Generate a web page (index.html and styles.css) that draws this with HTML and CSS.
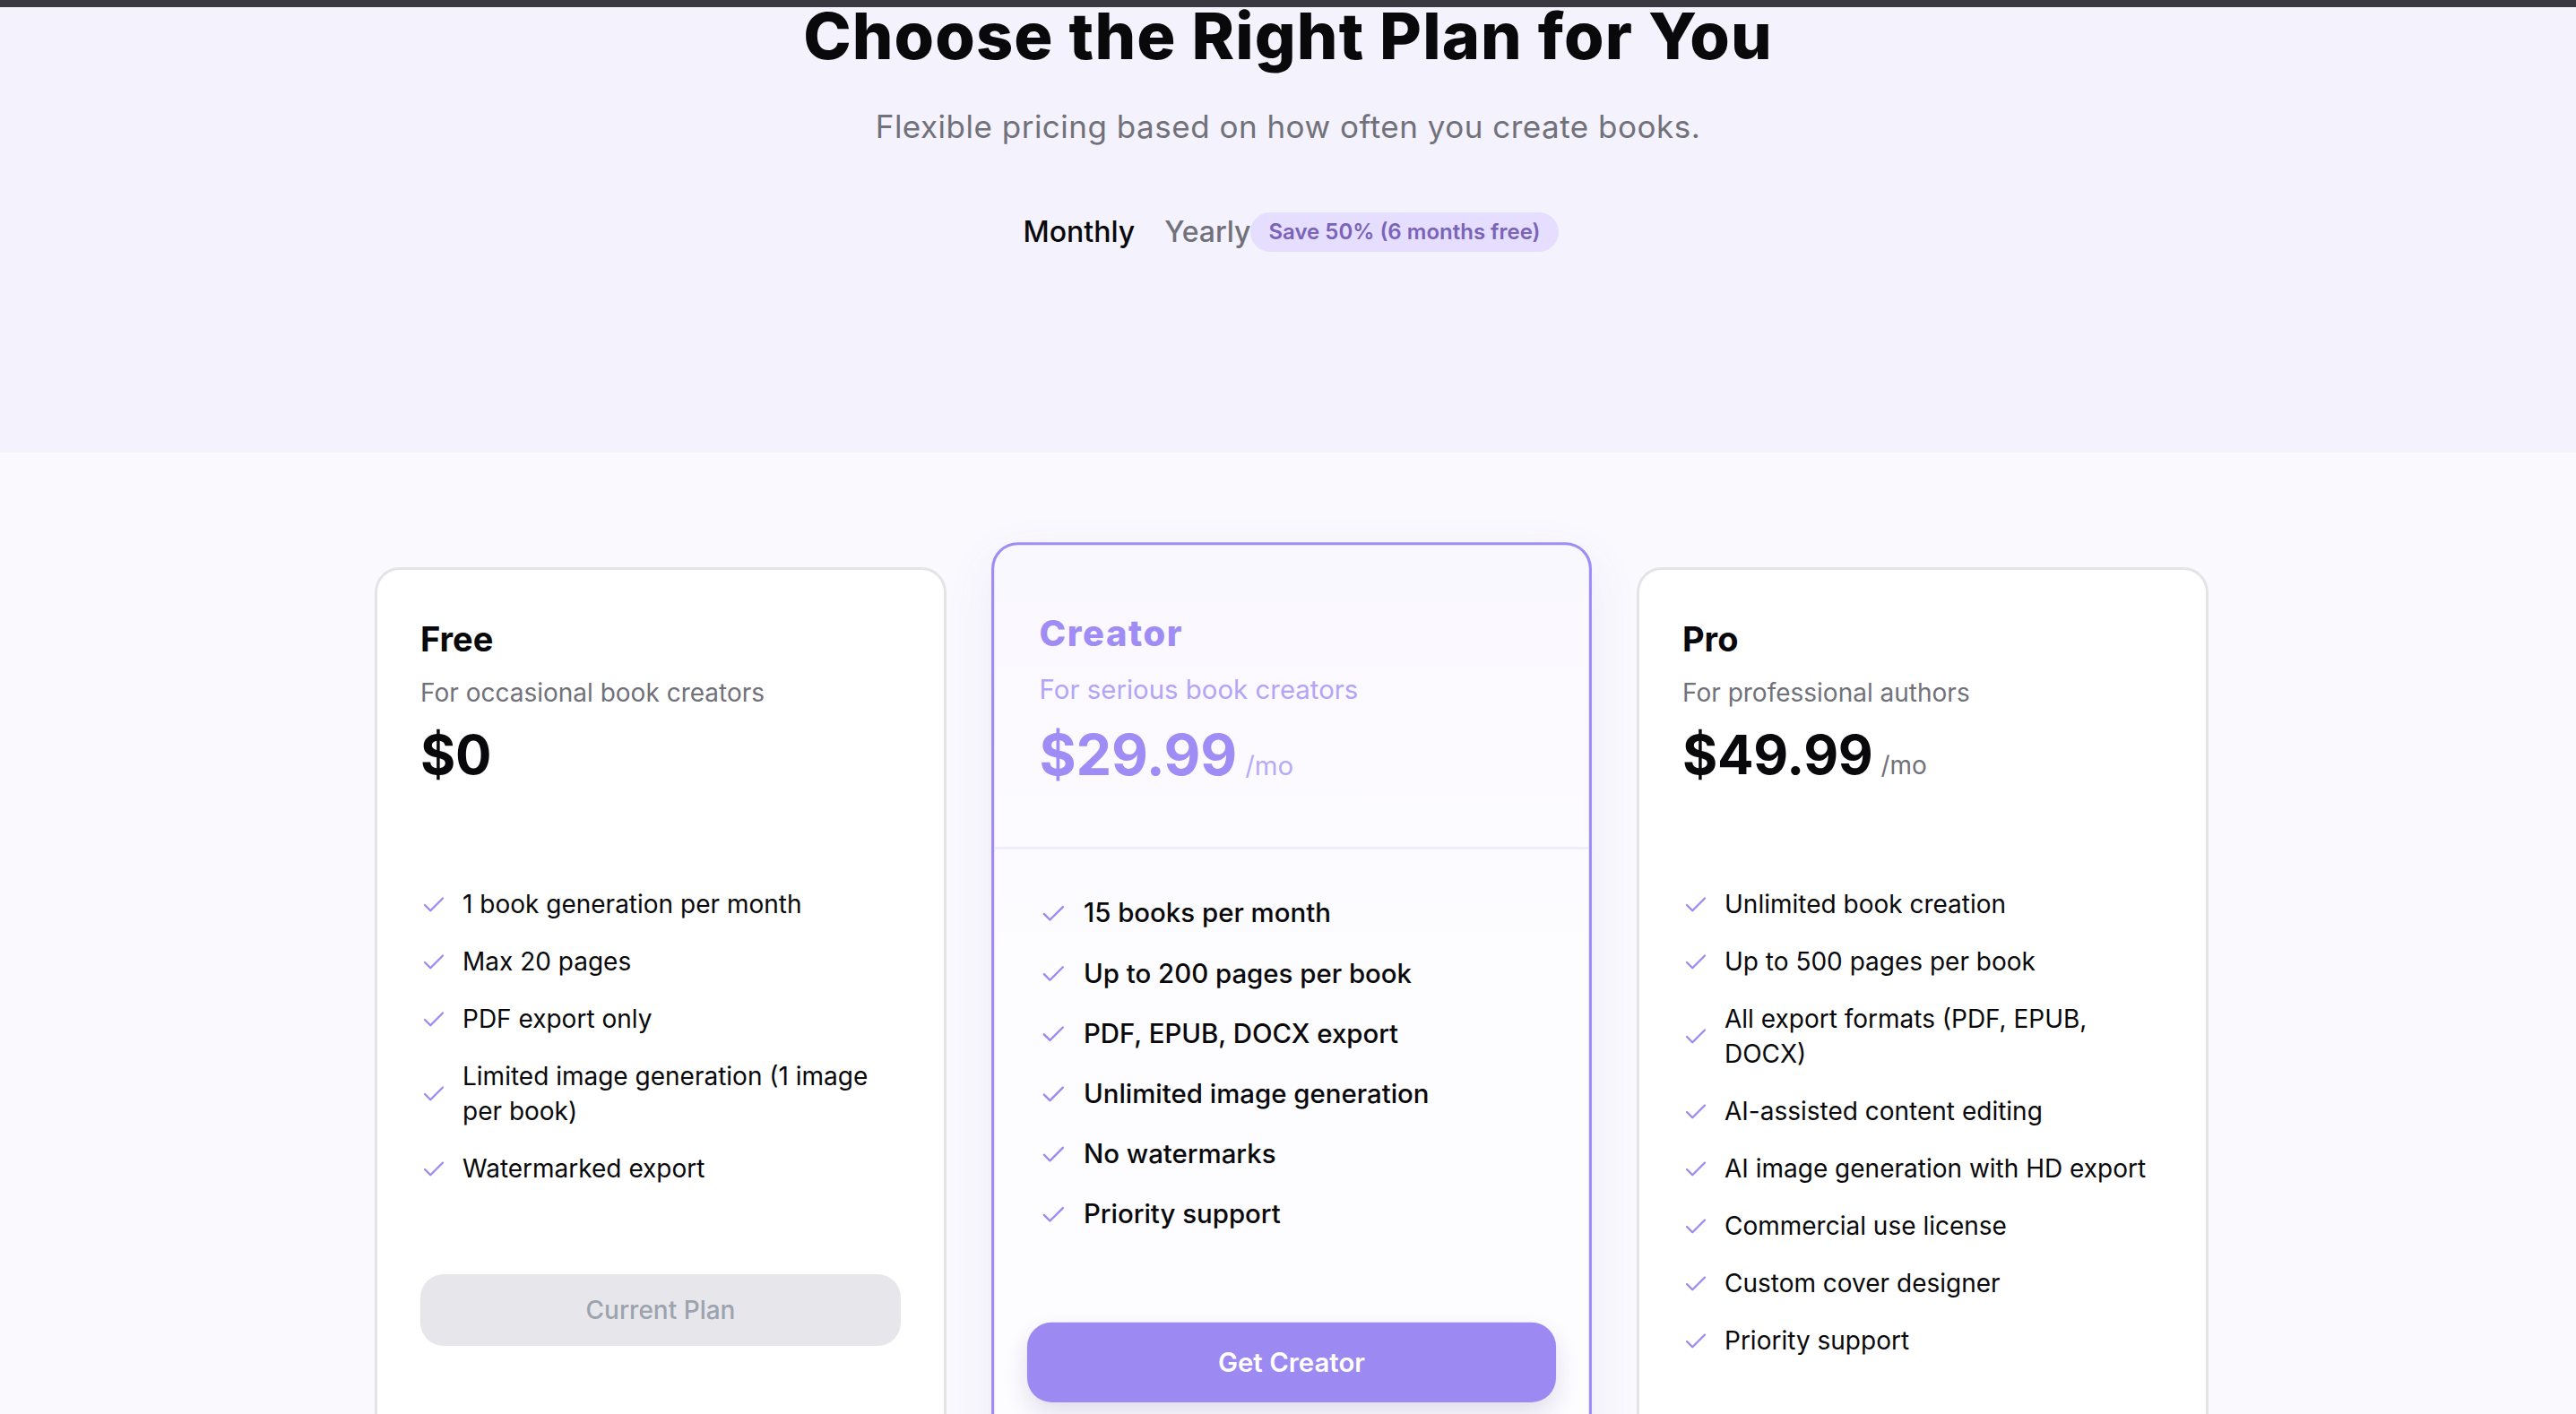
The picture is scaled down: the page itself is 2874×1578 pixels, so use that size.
FILE: index.html
```html
<!DOCTYPE html>
<html lang="en">
<head>
<meta charset="utf-8">
<title>Pricing</title>
<link rel="stylesheet" href="styles.css">
</head>
<body>
<div class="topbar"></div>
<header class="hero">
  <h1 class="hero-title">Choose the Right Plan for You</h1>
  <p class="lead">Flexible pricing based on how often you create books.</p>
  <div class="toggle">
    <span class="opt opt-active">Monthly</span>
    <span class="opt">Yearly</span>
    <span class="badge">Save 50% (6 months free)</span>
  </div>
</header>

<section class="plans">
  <div class="grid">
    <article class="card">
      <div class="card-head">
        <h3 class="plan-name">Free</h3>
        <p class="plan-desc">For occasional book creators</p>
        <div class="price"><span class="amount">$0</span></div>
      </div>
      <ul class="features">
        <li><svg class="check" viewBox="0 0 24 24"><polyline points="20 6 9 17 4 12"/></svg><span>1 book generation per month</span></li>
        <li><svg class="check" viewBox="0 0 24 24"><polyline points="20 6 9 17 4 12"/></svg><span>Max 20 pages</span></li>
        <li><svg class="check" viewBox="0 0 24 24"><polyline points="20 6 9 17 4 12"/></svg><span>PDF export only</span></li>
        <li><svg class="check" viewBox="0 0 24 24"><polyline points="20 6 9 17 4 12"/></svg><span>Limited image generation (1 image per book)</span></li>
        <li><svg class="check" viewBox="0 0 24 24"><polyline points="20 6 9 17 4 12"/></svg><span>Watermarked export</span></li>
      </ul>
      <div class="card-foot">
        <button class="btn btn-muted">Current Plan</button>
      </div>
    </article>

    <article class="card card-featured">
      <div class="card-head">
        <h3 class="plan-name plan-name-display">Creator</h3>
        <p class="plan-desc">For serious book creators</p>
        <div class="price"><span class="amount">$29.99</span><span class="per">/mo</span></div>
      </div>
      <ul class="features">
        <li><svg class="check" viewBox="0 0 24 24"><polyline points="20 6 9 17 4 12"/></svg><span>15 books per month</span></li>
        <li><svg class="check" viewBox="0 0 24 24"><polyline points="20 6 9 17 4 12"/></svg><span>Up to 200 pages per book</span></li>
        <li><svg class="check" viewBox="0 0 24 24"><polyline points="20 6 9 17 4 12"/></svg><span>PDF, EPUB, DOCX export</span></li>
        <li><svg class="check" viewBox="0 0 24 24"><polyline points="20 6 9 17 4 12"/></svg><span>Unlimited image generation</span></li>
        <li><svg class="check" viewBox="0 0 24 24"><polyline points="20 6 9 17 4 12"/></svg><span>No watermarks</span></li>
        <li><svg class="check" viewBox="0 0 24 24"><polyline points="20 6 9 17 4 12"/></svg><span>Priority support</span></li>
      </ul>
      <div class="card-foot">
        <button class="btn btn-primary">Get Creator</button>
      </div>
    </article>

    <article class="card">
      <div class="card-head">
        <h3 class="plan-name">Pro</h3>
        <p class="plan-desc">For professional authors</p>
        <div class="price"><span class="amount">$49.99</span><span class="per">/mo</span></div>
      </div>
      <ul class="features">
        <li><svg class="check" viewBox="0 0 24 24"><polyline points="20 6 9 17 4 12"/></svg><span>Unlimited book creation</span></li>
        <li><svg class="check" viewBox="0 0 24 24"><polyline points="20 6 9 17 4 12"/></svg><span>Up to 500 pages per book</span></li>
        <li><svg class="check" viewBox="0 0 24 24"><polyline points="20 6 9 17 4 12"/></svg><span>All export formats (PDF, EPUB, DOCX)</span></li>
        <li><svg class="check" viewBox="0 0 24 24"><polyline points="20 6 9 17 4 12"/></svg><span>AI-assisted content editing</span></li>
        <li><svg class="check" viewBox="0 0 24 24"><polyline points="20 6 9 17 4 12"/></svg><span>AI image generation with HD export</span></li>
        <li><svg class="check" viewBox="0 0 24 24"><polyline points="20 6 9 17 4 12"/></svg><span>Commercial use license</span></li>
        <li><svg class="check" viewBox="0 0 24 24"><polyline points="20 6 9 17 4 12"/></svg><span>Custom cover designer</span></li>
        <li><svg class="check" viewBox="0 0 24 24"><polyline points="20 6 9 17 4 12"/></svg><span>Priority support</span></li>
      </ul>
      <div class="card-foot">
        <button class="btn btn-muted">Get Pro</button>
      </div>
    </article>
  </div>
</section>
</body>
</html>
```

FILE: styles.css
```css
* { box-sizing: border-box; }

html { overflow: hidden; }

body {
  margin: 0;
  background: #faf9fe;
  font-family: Inter, "Noto Sans", "Liberation Sans", sans-serif;
  color: #09090b;
}

.topbar {
  position: fixed;
  top: 0;
  left: 0;
  right: 0;
  height: 8px;
  background: #3a393f;
  z-index: 10;
}

.hero {
  background: #f4f2fd;
  text-align: center;
  padding: 0 0 224px;
}

.hero-title {
  margin: 0;
  font-size: 72px;
  line-height: 80px;
  font-weight: 800;
  letter-spacing: 1.1px;
  color: #09090b;
}

.lead {
  margin: 39px 0 0;
  font-size: 35px;
  line-height: 44px;
  letter-spacing: 0.5px;
  color: #71717a;
}

.toggle {
  margin-top: 74px;
  display: flex;
  justify-content: center;
  align-items: center;
  height: 44px;
  padding-left: 6px;
}

.opt {
  font-size: 32px;
  line-height: 44px;
  font-weight: 500;
  color: #71717a;
}

.opt-active {
  color: #09090b;
  margin-right: 33px;
}

.badge {
  background: #e5defe;
  color: #7a63b8;
  font-weight: 600;
  font-size: 24px;
  line-height: 30px;
  padding: 7px 20px;
  border-radius: 999px;
}

.plans {
  padding: 128px 0 0 8px;
}

.grid {
  display: grid;
  grid-template-columns: repeat(3, 638px);
  gap: 66px;
  justify-content: center;
  align-items: stretch;
}

.card {
  border: 3px solid #e4e4e7;
  border-radius: 28px;
  background: #ffffff;
  display: flex;
  flex-direction: column;
}

.card-head {
  padding: 53px 48px 63px;
  border-bottom: 2px solid transparent;
}

.plan-name {
  margin: 0;
  font-size: 38px;
  line-height: 48px;
  font-weight: 700;
}

.plan-desc {
  margin: 17px 0 0;
  font-size: 28px;
  line-height: 38px;
  color: #71717a;
}

.price {
  margin-top: 14px;
  display: flex;
  align-items: baseline;
  gap: 9px;
}

.amount {
  font-size: 60px;
  line-height: 72px;
  font-weight: 700;
  letter-spacing: -0.3px;
}

.per {
  font-size: 28px;
  color: #71717a;
}

.features {
  list-style: none;
  margin: 0;
  padding: 47px 48px 0;
  display: flex;
  flex-direction: column;
  gap: 25px;
}

.features li {
  display: flex;
  align-items: center;
  gap: 17px;
  font-size: 28px;
  line-height: 39px;
  color: #09090b;
}

.check {
  width: 30px;
  height: 30px;
  flex: none;
  fill: none;
  stroke: #9d89f2;
  stroke-width: 1.8;
  stroke-linecap: round;
  stroke-linejoin: round;
}

.card-foot {
  padding: 98px 48px 48px;
}

.btn {
  display: block;
  width: 100%;
  height: 80px;
  border: 0;
  border-radius: 26px;
  font-family: inherit;
  font-size: 28px;
  font-weight: 500;
}

.btn-muted {
  background: #e7e7eb;
  color: #9ca3af;
}

/* featured plan */
.card-featured {
  border-color: #a08cf5;
  background: linear-gradient(180deg, #faf8ff 0%, #fdfcff 40%, #fdfcff 100%);
  transform: scale(1.05);
  box-shadow: 0 20px 50px rgba(120, 100, 200, 0.10);
}

.card-featured .card-head {
  padding-top: 69px;
  border-bottom-color: #ece8fd;
}

.plan-name-display {
  font-weight: 800;
  color: #a08cf5;
  letter-spacing: 1.5px;
}

.card-featured .plan-desc {
  color: #b3a5f6;
}

.card-featured .amount {
  color: #a08cf5;
}

.card-featured .per {
  color: #b8abf6;
}

.card-featured .features {
  padding-top: 49px;
}

.card-featured .features li {
  font-weight: 500;
}

.card-featured .card-foot {
  padding: 95px 35px 48px;
}

.btn-primary {
  height: 85px;
  background: #9d89f2;
  color: #ffffff;
  font-weight: 600;
  box-shadow: 0 12px 24px rgba(60, 40, 120, 0.14);
}
```
